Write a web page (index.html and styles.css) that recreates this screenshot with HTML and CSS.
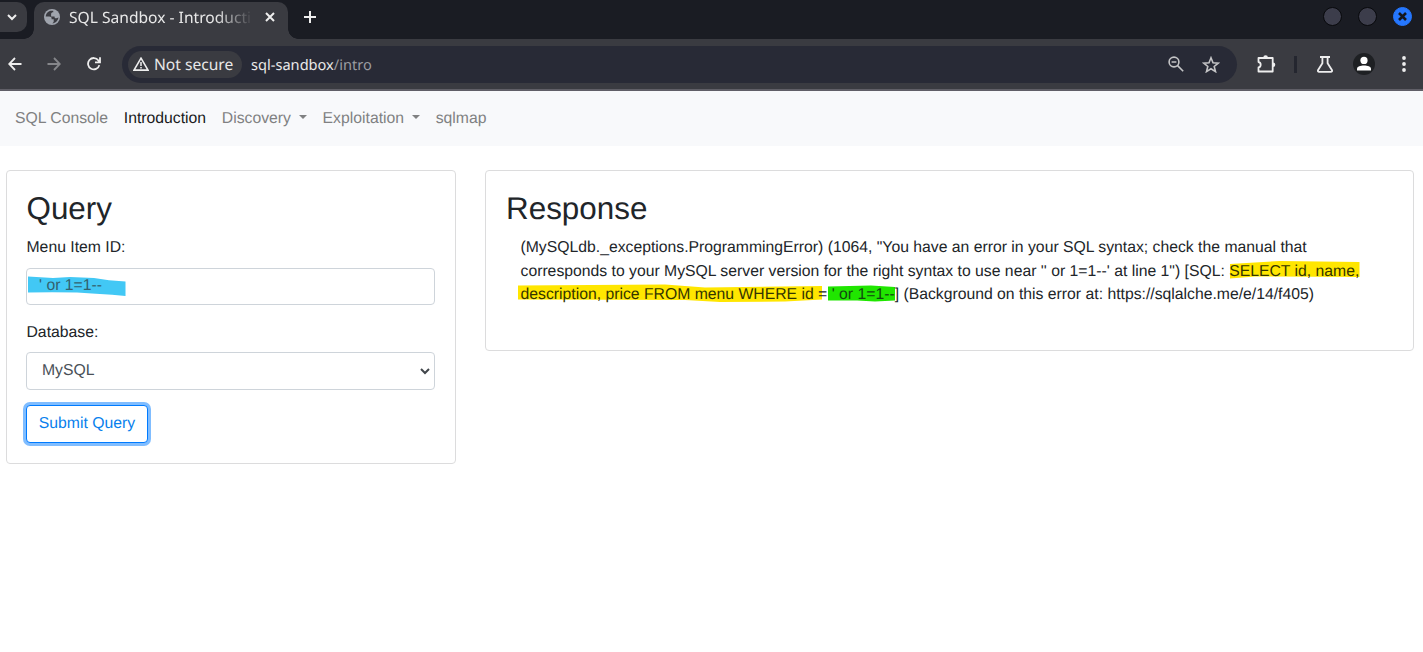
FILE: index.html
```html
<!DOCTYPE html>
<html lang="en">
<head>
<meta charset="utf-8">
<title>SQL Sandbox - Introduction</title>
<link rel="stylesheet" href="styles.css">
</head>
<body>
<header class="browser">
  <div class="tabstrip">
    <div class="tab-search"><svg width="12" height="12" viewBox="0 0 12 12"><path d="M2 4l4 4 4-4" class="line-2"/></svg></div>
    <div class="tab">
      <svg class="globe" width="16" height="16" viewBox="0 0 16 16"><circle cx="8" cy="8" r="8" fill="#9fa4ad"/><path d="M9.2 1.8C5 .9 2 3.7 1.7 7.6h3.5c1.6 0 2.4.8 2.4 1.8v.9h2.1v2.1c0 .8-.7 1.5-1.6 1.9 3.4.1 6.2-2.6 6.3-6-.7.7-1.4 1-2.2 1-1.2 0-1.7-.7-1.7-1.9H7.1V5.1c0-1.2.9-1.8 2.2-1.8z" fill="#3a3b41"/></svg>
      <span class="tab-title">SQL Sandbox - Introducti</span>
      <svg class="tab-close" width="10" height="10" viewBox="0 0 10 10"><path d="M1 1l8 8M9 1L1 9" class="line-2"/></svg>
    </div>
    <svg class="new-tab" width="12" height="12" viewBox="0 0 12 12"><path d="M6 0v12M0 6h12" class="line-2"/></svg>
    <div class="window-buttons">
      <i class="dot"></i><i class="dot"></i>
      <i class="dot dot-close"><svg width="9" height="9" viewBox="0 0 9 9"><path d="M1 1l7 7M8 1L1 8" stroke="#15171e" stroke-width="2.6"/></svg></i>
    </div>
  </div>
  <div class="toolbar">
    <svg class="back" width="14" height="14" viewBox="0 0 14 14"><path d="M13.5 7H1.5M7 1L1.2 7 7 13" class="line"/></svg>
    <svg class="forward" width="14" height="14" viewBox="0 0 14 14"><path d="M.5 7h12M7 1l5.8 6L7 13" class="line dim"/></svg>
    <svg class="reload" width="14" height="14" viewBox="0 0 14 14"><path d="M12.3 8.1A5.7 5.7 0 1 1 11.4 3.4L12.8 5M13 .3V5.3H8" class="line"/></svg>
    <div class="address">
      <div class="secure">
        <svg width="16" height="14" viewBox="0 0 16 14"><path d="M8 1.2L15 13.1H1z" fill="none" stroke="#eee" stroke-width="1.6"/><path d="M8 5v4M8 10v1.6" stroke="#eee" stroke-width="1.5"/></svg>
        <span>Not secure</span>
      </div>
      <span class="url">sql-sandbox<span class="path">/intro</span></span>
      <svg class="magnifier" width="16" height="16" viewBox="0 0 16 16"><circle cx="6" cy="6" r="4.9" class="line soft"/><path d="M3.6 6h4.8M9.6 9.6l5.6 5.6" class="line soft"/></svg>
      <svg class="star" width="18" height="17" viewBox="0 0 18 17"><path d="M9 1.8l2 4.9 5.3.4-4.1 3.4 1.3 5.1L9 12.8l-4.5 2.8 1.3-5.1-4.1-3.4 5.3-.4z" class="line soft"/></svg>
    </div>
    <svg class="puzzle" width="19" height="18" viewBox="0 0 19 18"><path d="M1.5 3h14.2v13.5H1.5v-4c2.9-.6 2.9-4.9 0-5.5z" class="line" stroke-linejoin="round"/><path d="M6.3 2.6a2.3 2.3 0 0 1 4.6 0zM16 7.4a2.3 2.3 0 0 1 0 4.6z" fill="#eee"/></svg>
    <i class="divider"></i>
    <svg class="flask" width="16" height="17" viewBox="0 0 16 17"><path d="M3 1h10M5.4 1v6.2L1.1 14c-.5.9 0 1.9 1 1.9h11.8c1 0 1.5-1 1-1.9L10.6 7.2V1" class="line"/></svg>
    <svg class="avatar" width="22" height="22" viewBox="0 0 22 22"><circle cx="11" cy="11" r="11" fill="#1e2023"/><circle cx="11" cy="7.4" r="3.6" fill="#fff"/><path d="M4 17.5v-1.8c0-4.4 14-4.4 14 0v1.8z" fill="#fff"/></svg>
    <svg class="dots" width="4" height="16" viewBox="0 0 4 16"><g fill="#eee"><circle cx="2" cy="2" r="1.9"/><circle cx="2" cy="8" r="1.9"/><circle cx="2" cy="14" r="1.9"/></g></svg>
  </div>
</header>
<nav class="navbar">
  <a>SQL Console</a><a class="active">Introduction</a><a class="dropdown">Discovery</a><a class="dropdown">Exploitation</a><a>sqlmap</a>
</nav>
<main class="content">
  <section class="card query">
    <h2>Query</h2>
    <div class="label">Menu Item ID:</div>
    <div class="field input">
      <svg class="mark" width="100" height="24" viewBox="0 0 100 24"><path d="M1 4.5L26 6 43 5 67 6 82 8.2 98.5 9.5V24L85 22.8 65 21.5 50 20.5 25 20.2 1 20.5z" fill="#42c8f5"/></svg>
      <span class="value">' or 1=1--</span>
    </div>
    <div class="label label-database">Database:</div>
    <div class="field select"><span>MySQL</span><svg width="10" height="7" viewBox="0 0 10 7"><path d="M1 1l4 4 4-4" fill="none" stroke="#41464b" stroke-width="2"/></svg></div>
    <button class="submit">Submit Query</button>
  </section>
  <section class="card response">
    <h2>Response</h2>
    <div class="message">
      <svg class="mark-response" width="860" height="72" viewBox="0 0 860 72"><path d="M715 30L740 28.5 765 27 844.5 28V43L740 42.5 715 44.5zM3 51.5L150 50.5 190 53.5 307 52V65.5L270 67.5 205 68 170 66 3 65.5z" fill="#ffe600"/><path d="M313 52.5l43-1 24 1.5v13.5l-20 1-18-1h-29z" fill="#20e600"/></svg>
      <div class="text">(MySQLdb._exceptions.ProgrammingError) (1064, "You have an error in your SQL syntax; check the manual that<br>corresponds to your MySQL server version for the right syntax to use near '' or 1=1--' at line 1") [SQL: <span class="y">SELECT id, name,</span><br><span class="y">description, price FROM menu WHERE id</span> =<span class="g"> ' or 1=1--</span>] (Background on this error at: https://sqlalche.me/e/14/f405)</div>
    </div>
  </section>
</main>
</body>
</html>
```
FILE: styles.css
```css
* { box-sizing: border-box; }
body { margin: 0; background: #fff; color: #212529; font: 15.75px/23.5px "Liberation Sans", Arial, sans-serif; text-rendering: geometricPrecision; overflow: hidden; }
svg { display: block; flex: none; }
.line, .line-2 { fill: none; stroke: #eee; stroke-width: 1.8; }
.line-2 { stroke-width: 2; }
.dim { stroke: #85868a; }
.soft { stroke: #c4c4c6; stroke-width: 1.6; }

.browser { height: 91px; background: #3a3b41; border-bottom: 2px solid #605f67; color: #e8e8e8; font-family: "Noto Sans", sans-serif; }
.tabstrip { height: 39px; background: #1a1c23; display: flex; align-items: flex-start; }
.tab-search { width: 27px; height: 30px; margin-top: 2px; padding: 9px 0 0 6px; background: #3a3b41; border-radius: 0 10px 10px 0; }
.tab { position: relative; width: 254px; height: 37px; margin: 2px 0 0 7px; padding: 0 13px 7px 10px; display: flex; align-items: center; background: #3a3b41; border-radius: 10px 10px 0 0; }
.tab::before, .tab::after { content: ""; position: absolute; bottom: 0; width: 10px; height: 10px; }
.tab::before { left: -10px; background: radial-gradient(circle at 0 0, transparent 9.5px, #3a3b41 10px); }
.tab::after { right: -10px; background: radial-gradient(circle at 100% 0, transparent 9.5px, #3a3b41 10px); }
.tab-title { flex: none; width: 186px; margin-left: 9px; font-size: 15.6px; line-height: 24px; white-space: nowrap; -webkit-mask-image: linear-gradient(90deg, #000 146px, transparent 184px); mask-image: linear-gradient(90deg, #000 146px, transparent 184px); }
.tab-close { margin-left: auto; }
.new-tab { margin: 11px 0 0 16px; }
.window-buttons { display: flex; gap: 16px; margin: 7px 11px 0 auto; }
.dot { width: 19px; height: 19px; border: 1px solid #08090c; border-radius: 50%; background: #3c3d4b; display: flex; align-items: center; justify-content: center; }
.dot-close { background: #2577ff; border-color: #2577ff; }

.toolbar { height: 50px; display: flex; align-items: center; padding-left: 8px; }
.forward { margin-left: 25px; }
.reload { margin-left: 26px; }
.address { width: 1115px; height: 37px; margin-left: 21px; border-radius: 19px; background: #282a36; display: flex; align-items: center; padding-left: 6px; }
.secure { width: 114px; height: 27px; border-radius: 14px; background: #3a3b41; display: flex; align-items: center; padding-left: 5px; font-size: 15.6px; line-height: 26px; white-space: nowrap; }
.secure span { margin-left: 5px; }
.url { margin: 3px 0 0 9px; font-size: 14.6px; }
.path { color: #9b9ca1; }
.magnifier { margin-left: auto; }
.star { margin: 0 17px 0 18px; }
.puzzle { margin-left: 20px; }
.divider { width: 3px; height: 17px; margin-left: 18px; background: #24262f; }
.flask { margin-left: 20px; }
.avatar { margin-left: 20px; }
.dots { margin-left: 27px; }

.navbar { height: 55px; padding: 1px 0 0 15px; display: flex; align-items: center; gap: 15.7px; background: #f8f9fb; color: #808182; }
.active { color: #191a1b; }
.dropdown::after { content: ""; display: inline-block; margin-left: 8px; vertical-align: 4px; border: 4.5px solid transparent; border-top-color: currentColor; border-bottom: 0; }

.content { display: flex; align-items: flex-start; gap: 29px; padding: 24px 0 0 6px; }
.card { border: 1px solid #dcdcdd; border-radius: 4px; padding: 19px; }
.query { width: 450px; height: 294px; padding-right: 20px; }
.response { width: 929px; height: 181px; padding-left: 20px; }
h2 { margin: 0 0 8px; font-size: 31.4px; line-height: 38px; font-weight: 400; }
.query h2, .label { padding-left: .5px; }
.field { width: 409px; height: 37px; margin-top: 8px; border: 1px solid #ced4da; border-radius: 4px; color: #495057; display: flex; align-items: center; }
.input { position: relative; }
.mark { position: absolute; left: 0; top: 3px; }
.value { position: relative; padding: 0 0 1px 12px; color: #33616e; }
.label-database { margin-top: 16px; }
.select { height: 38px; padding: 0 4px 0 15px; justify-content: space-between; }
.select svg { margin-top: 1px; }
.submit { display: block; width: 122px; height: 38px; margin-top: 15px; padding: 0; border: 1px solid #007bff; border-radius: 4px; background: #fff; box-shadow: 0 0 0 3px #80bdff; color: #087fed; font: inherit; text-rendering: inherit; }
.message { position: relative; padding-left: 14.5px; white-space: nowrap; }
.mark-response { position: absolute; left: 9px; top: -2px; }
.text { position: relative; }
.y { color: #343500; }
.g { color: #114811; }
```
